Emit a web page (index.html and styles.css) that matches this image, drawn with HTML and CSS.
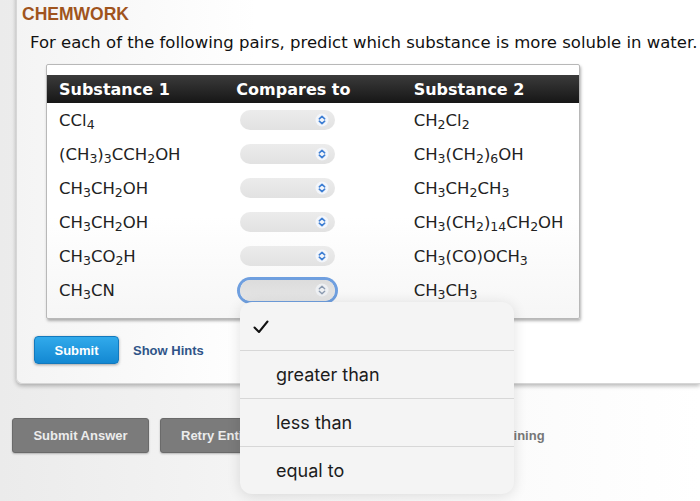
FILE: index.html
```html
<!DOCTYPE html>
<html>
<head>
<meta charset="utf-8">
<link rel="stylesheet" href="styles.css">
</head>
<body>
<div class="page">
  <div class="card">
    <h1 class="brand">CHEMWORK</h1>
    <p class="prompt">For each of the following pairs, predict which substance is more soluble in water.</p>
    <div class="tablebox">
      <table class="grid">
        <thead>
          <tr><th>Substance 1</th><th>Compares to</th><th>Substance 2</th></tr>
        </thead>
        <tbody>
          <tr>
            <td>CCl<sub>4</sub></td>
            <td><span class="sel"><svg class="chev" viewBox="0 0 14 14"><circle cx="7" cy="7" r="6.5" fill="#f3f6fb"/><path d="M4.3 5.8 L7 3.3 L9.7 5.8 M4.3 8.2 L7 10.7 L9.7 8.2" fill="none" stroke="#3f7fd3" stroke-width="1.6" stroke-linecap="round" stroke-linejoin="round"/></svg></span></td>
            <td>CH<sub>2</sub>Cl<sub>2</sub></td>
          </tr>
          <tr>
            <td>(CH<sub>3</sub>)<sub>3</sub>CCH<sub>2</sub>OH</td>
            <td><span class="sel"><svg class="chev" viewBox="0 0 14 14"><circle cx="7" cy="7" r="6.5" fill="#f3f6fb"/><path d="M4.3 5.8 L7 3.3 L9.7 5.8 M4.3 8.2 L7 10.7 L9.7 8.2" fill="none" stroke="#3f7fd3" stroke-width="1.6" stroke-linecap="round" stroke-linejoin="round"/></svg></span></td>
            <td>CH<sub>3</sub>(CH<sub>2</sub>)<sub>6</sub>OH</td>
          </tr>
          <tr>
            <td>CH<sub>3</sub>CH<sub>2</sub>OH</td>
            <td><span class="sel"><svg class="chev" viewBox="0 0 14 14"><circle cx="7" cy="7" r="6.5" fill="#f3f6fb"/><path d="M4.3 5.8 L7 3.3 L9.7 5.8 M4.3 8.2 L7 10.7 L9.7 8.2" fill="none" stroke="#3f7fd3" stroke-width="1.6" stroke-linecap="round" stroke-linejoin="round"/></svg></span></td>
            <td>CH<sub>3</sub>CH<sub>2</sub>CH<sub>3</sub></td>
          </tr>
          <tr>
            <td>CH<sub>3</sub>CH<sub>2</sub>OH</td>
            <td><span class="sel"><svg class="chev" viewBox="0 0 14 14"><circle cx="7" cy="7" r="6.5" fill="#f3f6fb"/><path d="M4.3 5.8 L7 3.3 L9.7 5.8 M4.3 8.2 L7 10.7 L9.7 8.2" fill="none" stroke="#3f7fd3" stroke-width="1.6" stroke-linecap="round" stroke-linejoin="round"/></svg></span></td>
            <td>CH<sub>3</sub>(CH<sub>2</sub>)<sub>14</sub>CH<sub>2</sub>OH</td>
          </tr>
          <tr>
            <td>CH<sub>3</sub>CO<sub>2</sub>H</td>
            <td><span class="sel"><svg class="chev" viewBox="0 0 14 14"><circle cx="7" cy="7" r="6.5" fill="#f3f6fb"/><path d="M4.3 5.8 L7 3.3 L9.7 5.8 M4.3 8.2 L7 10.7 L9.7 8.2" fill="none" stroke="#3f7fd3" stroke-width="1.6" stroke-linecap="round" stroke-linejoin="round"/></svg></span></td>
            <td>CH<sub>3</sub>(CO)OCH<sub>3</sub></td>
          </tr>
          <tr>
            <td>CH<sub>3</sub>CN</td>
            <td><span class="sel focus"><svg class="chev" viewBox="0 0 14 14"><circle cx="7" cy="7" r="6.5" fill="#eef0f3"/><path d="M4.3 5.8 L7 3.3 L9.7 5.8 M4.3 8.2 L7 10.7 L9.7 8.2" fill="none" stroke="#8c9bb0" stroke-width="1.4" stroke-linecap="round" stroke-linejoin="round"/></svg></span></td>
            <td>CH<sub>3</sub>CH<sub>3</sub></td>
          </tr>
        </tbody>
      </table>
    </div>
    <div class="actions">
      <button class="submit">Submit</button>
      <a class="hints">Show Hints</a>
    </div>
  </div>
  <div class="footer">
    <button class="gray">Submit Answer</button>
    <button class="gray retry">Retry Entire Group</button>
    <span class="remaining">2 more group attempts remaining</span>
  </div>
</div>
<div class="popup">
  <div class="opt"><svg class="check" viewBox="0 0 16 14"><path d="M1.5 7.5 L6 12 L14.5 1.5" fill="none" stroke="#111" stroke-width="2" stroke-linecap="round" stroke-linejoin="round"/></svg></div>
  <div class="opt">greater than</div>
  <div class="opt">less than</div>
  <div class="opt">equal to</div>
</div>
</body>
</html>
```

FILE: styles.css
```css
html, body {
  margin: 0;
  padding: 0;
  overflow: hidden;
  width: 700px;
  height: 501px;
}
body {
  background: linear-gradient(to right, #ebebeb 0%, #f7f7f7 45%, #ffffff 100%);
  font-family: "DejaVu Sans", Verdana, sans-serif;
  position: relative;
}
.page {
  width: 700px;
}
.card {
  margin: -10px 0 0 16px;
  width: 684px;
  box-sizing: border-box;
  padding: 12px 0 19px 0;
  background: linear-gradient(to right, #f4f4f4 0%, #ffffff 35%, #ffffff 100%);
  border: 1px solid #d6d6d6;
  border-right: none;
  border-radius: 0 0 0 6px;
  box-shadow: 0 2px 4px rgba(0, 0, 0, 0.28);
}
.brand {
  margin: 0 0 0 5px;
  font-family: "Liberation Sans", Arial, sans-serif;
  font-weight: bold;
  font-size: 17.5px;
  line-height: 22px;
  color: #a0541d;
}
.prompt {
  margin: 8px 0 0 13px;
  font-size: 16.5px;
  line-height: 20px;
  color: #111;
  white-space: nowrap;
}
.tablebox {
  margin: 11px 0 0 29px;
  width: 532px;
  padding: 10px 0 11px 0;
  background: linear-gradient(to bottom, #ffffff 60%, #f6f6f6 100%);
  border: 1px solid #b8b8b8;
  border-radius: 2px;
  box-shadow: 1px 2px 3px rgba(0, 0, 0, 0.3);
}
.grid {
  width: 532px;
  border-collapse: collapse;
  table-layout: fixed;
}
.grid th {
  height: 28px;
  padding: 0 0 0 12px;
  text-align: left;
  font-size: 16px;
  font-weight: bold;
  color: #fff;
  background: linear-gradient(to bottom, #3b3b3b, #161616);
}
.grid td {
  height: 34px;
  padding: 0 0 0 12px;
  font-size: 16.5px;
  color: #222;
  white-space: nowrap;
  vertical-align: middle;
}
.grid sub {
  font-size: 12.5px;
  vertical-align: -3px;
  line-height: 0;
}
.sel {
  display: flex;
  align-items: center;
  justify-content: flex-end;
  box-sizing: border-box;
  width: 95px;
  height: 20px;
  margin-left: 4px;
  padding-right: 6px;
  border-radius: 10px;
  background: linear-gradient(to bottom, #ececec, #e2e2e2);
}
.sel.focus {
  height: 21px;
  background: linear-gradient(to bottom, #dcdcdc, #e6e6e6);
  box-shadow: 0 0 0 3px #6f9fdf;
  border-radius: 11px;
}
.chev {
  width: 14px;
  height: 14px;
}
.actions {
  display: flex;
  align-items: center;
  margin: 17px 0 0 17px;
}
.submit {
  width: 85px;
  height: 28px;
  border: 1px solid #1379bd;
  border-radius: 4px;
  background: linear-gradient(to bottom, #31aaeb, #1388d2);
  color: #fff;
  font-family: "Liberation Sans", Arial, sans-serif;
  font-weight: bold;
  font-size: 13px;
  box-shadow: 0 1px 3px rgba(0, 0, 0, 0.35);
  padding: 0;
}
.hints {
  margin-left: 14px;
  font-family: "Liberation Sans", Arial, sans-serif;
  font-weight: bold;
  font-size: 13px;
  color: #2f5488;
}
.footer {
  display: flex;
  align-items: center;
  margin: 34px 0 0 12px;
}
.gray {
  height: 35px;
  padding: 0;
  border: 1px solid #6a6a6a;
  border-radius: 3px;
  background: #7b7b7b;
  color: #ececec;
  font-family: "Liberation Sans", Arial, sans-serif;
  font-weight: bold;
  font-size: 13px;
  box-shadow: 0 1px 2px rgba(0, 0, 0, 0.25);
}
.gray:first-child {
  width: 137px;
}
.retry {
  margin-left: 11px;
  width: 140px;
  text-align: left;
  padding-left: 20px;
}
.remaining {
  margin-left: 38px;
  font-family: "Liberation Sans", Arial, sans-serif;
  font-weight: bold;
  font-size: 13px;
  color: #777;
}
.popup {
  position: absolute;
  left: 240px;
  top: 302px;
  width: 274px;
  border-radius: 12px;
  background: #f4f4f4;
  box-shadow: 0 2px 14px rgba(0, 0, 0, 0.12);
  overflow: hidden;
}
.opt {
  box-sizing: border-box;
  height: 48px;
  display: flex;
  align-items: center;
  padding-left: 36px;
  border-top: 1px solid #d7d7d7;
  font-family: Inter, "Liberation Sans", sans-serif;
  font-size: 18px;
  color: #1c1c1c;
}
.opt:first-child {
  border-top: none;
  padding-left: 13px;
}
.check {
  width: 16px;
  height: 14px;
  margin-top: 2px;
}
```
